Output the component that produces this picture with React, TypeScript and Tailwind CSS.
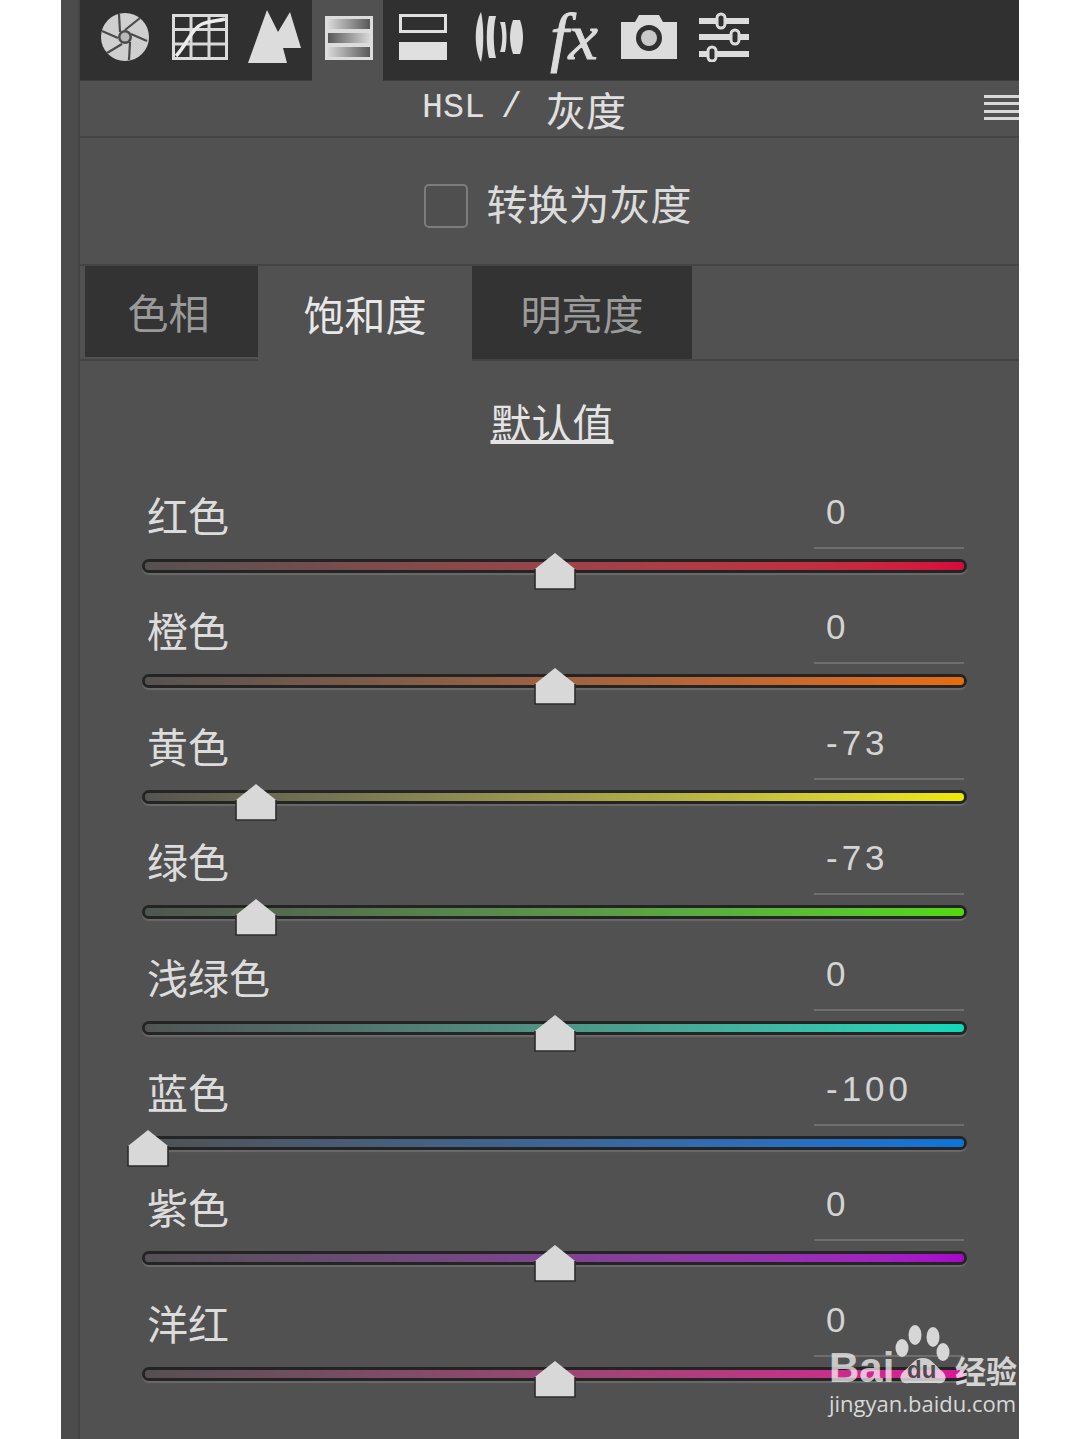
import React from "react";

const cjk = "font-['Noto_Sans_CJK_SC',sans-serif]";

type Row = { label: string; value: string; pos: number; gradient: string };

const rows: Row[] = [
  { label: "红色", value: "0", pos: 412, gradient: "bg-gradient-to-r from-[#565051] to-[#d9083c]" },
  { label: "橙色", value: "0", pos: 412, gradient: "bg-gradient-to-r from-[#565250] to-[#e86c0c]" },
  { label: "黄色", value: "-73", pos: 113, gradient: "bg-gradient-to-r from-[#555550] to-[#efe800]" },
  { label: "绿色", value: "-73", pos: 113, gradient: "bg-gradient-to-r from-[#505550] to-[#54d80c]" },
  { label: "浅绿色", value: "0", pos: 412, gradient: "bg-gradient-to-r from-[#505554] to-[#0cd8bc]" },
  { label: "蓝色", value: "-100", pos: 5, gradient: "bg-gradient-to-r from-[#505254] to-[#0a74dc]" },
  { label: "紫色", value: "0", pos: 412, gradient: "bg-gradient-to-r from-[#545055] to-[#a806cc]" },
  { label: "洋红", value: "0", pos: 412, gradient: "bg-gradient-to-r from-[#555052] to-[#dc1494]" },
];

const Aperture = () => (
  <svg width="50" height="50" viewBox="0 0 50 50">
    <circle cx="25" cy="25" r="24" fill="#cfcfcf" />
    <circle cx="25" cy="25" r="7" fill="#4a4a4a" />
    <circle cx="25" cy="25" r="4.5" fill="#b8b8b8" />
    <g stroke="#4a4a4a" strokeWidth="2.2" fill="none">
      <path d="M25 18 L40 6" />
      <path d="M31 22 L47 29" />
      <path d="M30 30 L29 48" />
      <path d="M22 32 L7 41" />
      <path d="M18 26 L2 19" />
      <path d="M20 20 L19 2" />
    </g>
  </svg>
);

const GridIcon = () => (
  <svg width="56" height="46" viewBox="0 0 56 46">
    <rect x="1.5" y="1.5" width="53" height="43" fill="#303030" stroke="#dcdcdc" strokeWidth="3" />
    <path d="M19 2V44M37 2V44M2 15.5H54M2 30H54" stroke="#d8d8d8" strokeWidth="3" />
    <path d="M4 42C14 32 20 14 30 10C38 7 46 7 53 5" stroke="#ececec" strokeWidth="3.5" fill="none" />
  </svg>
);

const Mountains = () => (
  <svg width="54" height="54" viewBox="0 0 54 54">
    <path d="M0 53L19 0L30 22L42 2L53 38H35L39 53Z" fill="#dcdcdc" />
  </svg>
);

const HslIcon = () => (
  <svg width="50" height="46" viewBox="0 0 50 46">
    <defs>
      <linearGradient id="hsl-a" x1="0" x2="1" y1="0" y2="0">
        <stop offset="0" stopColor="#d8d8d8" />
        <stop offset="1" stopColor="#585858" />
      </linearGradient>
      <linearGradient id="hsl-b" x1="0" x2="1" y1="0" y2="0">
        <stop offset="0" stopColor="#585858" />
        <stop offset="1" stopColor="#d8d8d8" />
      </linearGradient>
    </defs>
    <rect x="1" y="1" width="48" height="44" fill="#dcdcdc" />
    <rect x="4" y="4" width="42" height="10" fill="url(#hsl-a)" />
    <rect x="4" y="18" width="42" height="10" fill="url(#hsl-b)" />
    <rect x="4" y="32" width="42" height="10" fill="url(#hsl-a)" />
  </svg>
);

const SplitIcon = () => (
  <svg width="48" height="46" viewBox="0 0 48 46">
    <rect x="1.5" y="1.5" width="45" height="16" fill="none" stroke="#e0e0e0" strokeWidth="3" />
    <rect x="0" y="28" width="48" height="18" fill="#e0e0e0" />
  </svg>
);

const LensIcon = () => (
  <svg width="50" height="52" viewBox="0 0 50 52">
    <path d="M7 1C0 14 0 38 7 51C10 38 10 14 7 1Z" fill="#dcdcdc" />
    <path d="M15 5C12 16 12 36 15 47L22 47C19 36 19 16 22 5Z" fill="#dcdcdc" />
    <path d="M26 11C29 20 29 32 26 41L31 41C33 32 33 20 31 11Z" fill="#dcdcdc" />
    <path d="M39 9C35 20 35 32 39 43L46 43C50 32 50 20 46 9Z" fill="#dcdcdc" />
  </svg>
);

const FxIcon = () => (
  <span className="text-[#dcdcdc] text-[66px] leading-none italic font-['Liberation_Serif',serif] [-webkit-text-stroke:1px_#dcdcdc]">fx</span>
);

const CameraIcon = () => (
  <svg width="56" height="44" viewBox="0 0 56 44">
    <path d="M0 7H14L18 0H38L42 7H56V44H0Z" fill="#dcdcdc" />
    <circle cx="28" cy="23" r="13" fill="#303030" />
    <circle cx="28" cy="23" r="8" fill="#c8c8c8" />
  </svg>
);

const SlidersIcon = () => (
  <svg width="50" height="50" viewBox="0 0 50 50">
    <path d="M0 9H50M0 25H50M0 42H50" stroke="#dcdcdc" strokeWidth="6" />
    <g fill="#303030" stroke="#dcdcdc" strokeWidth="3">
      <rect x="18" y="2" width="8" height="14" rx="4" />
      <rect x="32" y="18" width="8" height="14" rx="4" />
      <rect x="9" y="35" width="8" height="14" rx="4" />
    </g>
  </svg>
);

const Thumb = ({ left }: { left: number }) => (
  <svg
    className="absolute top-[-10px]"
    style={{ left }}
    width="42"
    height="38"
    viewBox="0 0 42 38"
  >
    <path d="M21 1L41 17V37H1V17Z" fill="#d8d8d8" />
    <path d="M41 17V37H1V17" fill="none" stroke="#2c2c2c" strokeWidth="1.6" />
  </svg>
);

const Paw = () => (
  <svg width="55" height="60" viewBox="0 0 55 60" fill="#d6d6d6">
    <ellipse cx="7" cy="23" rx="6.5" ry="9" />
    <ellipse cx="20" cy="10" rx="6.5" ry="10" />
    <ellipse cx="38" cy="12" rx="6.5" ry="10" />
    <ellipse cx="48" cy="27" rx="6.5" ry="9" />
    <path d="M28 33C37 33 40 41 47 46C54 52 50 60 42 58H14C6 60 2 52 9 46C16 41 19 33 28 33Z" fill="#ffffff" fillOpacity="0.72" />
  </svg>
);

export default function App() {
  return (
    <div className="relative w-[1080px] h-[1439px] bg-white overflow-hidden pl-[61px]">
      <div className={`w-[958px] h-full flex bg-[#515151] overflow-hidden ${cjk}`}>
        <div className="w-[19px] h-full bg-[#4c4c4c] border-r-2 border-[#454545] shrink-0" />
        <div className="flex-1 min-w-0 flex flex-col">
          {/* icon bar */}
          <div className="h-[81px] bg-[#303030] flex pl-[7px] shrink-0 border-b border-[#3c3c3c]">
            <div className="w-[75px] pb-[6px] flex items-center justify-center"><Aperture /></div>
            <div className="w-[75px] pb-[6px] flex items-center justify-center"><GridIcon /></div>
            <div className="w-[75px] pb-[6px] flex items-center justify-center"><Mountains /></div>
            <div className="w-[71px] h-[81px] pb-[6px] pl-[3px] bg-[#515151] flex items-center justify-center"><HslIcon /></div>
            <div className="w-[80px] pb-[6px] flex items-center justify-center"><SplitIcon /></div>
            <div className="w-[72px] pb-[6px] flex items-center justify-center"><LensIcon /></div>
            <div className="w-[78px] pb-[6px] flex items-center justify-center"><FxIcon /></div>
            <div className="w-[72px] pb-[6px] flex items-center justify-center"><CameraIcon /></div>
            <div className="w-[78px] pb-[6px] flex items-center justify-center"><SlidersIcon /></div>
          </div>

          {/* title */}
          <div className="relative h-[57px] shrink-0 border-b-2 border-[#444444] flex items-center justify-center pr-[51px] text-[#e0e0e0]">
            <span className="text-[35px] leading-none font-['Liberation_Mono',monospace]">HSL</span>
            <span className="text-[35px] leading-none font-['Liberation_Mono',monospace] ml-[16px] mr-[24px]">/</span>
            <span className="text-[40px] leading-none">灰度</span>
            <div className="absolute right-0 top-[14px] w-[35px] h-[25px] flex flex-col justify-between">
              <div className="h-[3px] bg-[#d8d8d8]" />
              <div className="h-[3px] bg-[#d8d8d8]" />
              <div className="h-[3px] bg-[#d8d8d8]" />
              <div className="h-[3px] bg-[#d8d8d8]" />
            </div>
          </div>

          {/* convert checkbox */}
          <div className="h-[128px] shrink-0 flex items-center justify-center pl-[16px] gap-[19px] border-b-2 border-[#444444]">
            <div className="w-[44px] h-[44px] mt-[9px] rounded-[5px] border-2 border-[#7d7d7d] bg-[#4f4f4f]" />
            <span className="text-[41px] leading-none text-[#dcdcdc] mt-[2px]">转换为灰度</span>
          </div>

          {/* tabs */}
          <div className="h-[95px] shrink-0 flex pl-[5px] border-b-2 border-[#444444] text-[41px] leading-none">
            <div className="w-[173px] h-[91px] pr-[6px] bg-[#333333] text-[#9a9a9a] flex items-center justify-center">色相</div>
            <div className="w-[214px] h-[95px] bg-[#515151] text-[#e8e8e8] flex items-center justify-center">饱和度</div>
            <div className="w-[220px] h-[93px] bg-[#333333] text-[#9a9a9a] flex items-center justify-center">明亮度</div>
          </div>

          <div className="h-[88px] shrink-0 flex items-center justify-center pl-[5px] pt-[32px]">
            <span className="text-[41px] leading-none text-[#e4e4e4] underline underline-offset-1">默认值</span>
          </div>

          {/* sliders */}
          <div className="pl-[62px] pt-[48px] flex flex-col">
            {rows.map((row) => (
              <div key={row.label} className="h-[115.4px] shrink-0">
                <div className="h-[62px] flex items-start">
                  <span className="w-[672px] text-[41px] leading-[34px] text-[#dcdcdc] pl-[5px]">{row.label}</span>
                  <div className="w-[150px] h-[52px] border-b-2 border-[#6e6e6e] pl-[12px] text-[35px] leading-[30px] tracking-[4px] text-[#d4d4d4] font-['Liberation_Sans',sans-serif]">
                    {row.value}
                  </div>
                </div>
                <div className="relative w-[825px] h-[14px] rounded-full border-[3px] border-[#242424] shadow-[0_2px_1px_#6a6a6a]">
                  <div className={`h-full rounded-full ${row.gradient}`} />
                  <Thumb left={row.pos - 23} />
                </div>
              </div>
            ))}
          </div>
        </div>
      </div>

      {/* watermark */}
      <div className="absolute left-[829px] top-[1322px] w-[251px] h-[110px] font-['Liberation_Sans',sans-serif]">
        <span className="absolute left-0 top-[25px] text-[42px] leading-none font-bold text-white/70">Bai</span>
        <div className="absolute left-[66px] top-[3px]"><Paw /></div>
        <span className="absolute left-[78px] top-[36px] text-[24px] leading-none font-bold text-[#4c4c4c]">du</span>
        <span className={`absolute left-[126px] top-[32px] text-[31px] leading-none font-bold text-white/75 ${cjk}`}>经验</span>
        <span className="absolute left-0 top-[70px] text-[22px] leading-none text-[#d8d8d8] font-['Open_Sans',sans-serif]">jingyan.baidu.com</span>
      </div>
    </div>
  );
}
